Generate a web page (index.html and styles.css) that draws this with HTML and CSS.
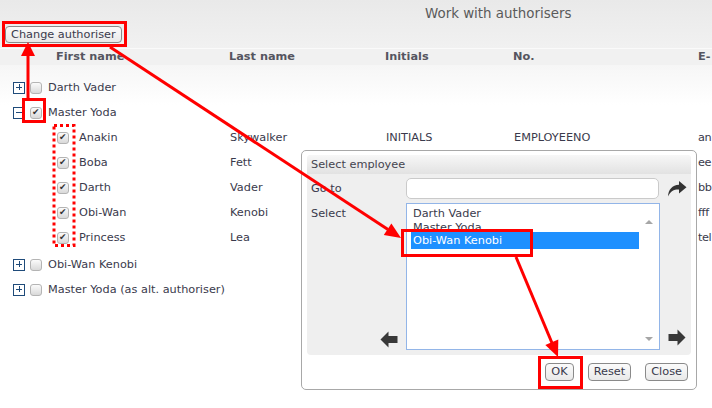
FILE: index.html
```html
<!DOCTYPE html>
<html>
<head>
<meta charset="utf-8">
<link rel="stylesheet" href="styles.css">
</head>
<body>
<div class="page">
  <div class="top">
    <div class="title">Work with authorisers</div>
    <button class="btn change">Change authoriser</button>
  </div>
  <div class="thead">
    <span class="h1">First name</span><span class="h2">Last name</span><span class="h3">Initials</span><span class="h4">No.</span><span class="h5">E-</span>
  </div>
  <div class="tree">
    <div class="row parent"><span class="exp plus"></span><span class="cb"></span><span class="pname">Darth Vader</span></div>
    <div class="row parent"><span class="exp minus"></span><span class="cb checked"></span><span class="pname">Master Yoda</span></div>
    <div class="children">
      <div class="row child"><span class="cb checked"></span><span class="c1">Anakin</span><span class="c2">Skywalker</span><span class="c3">INITIALS</span><span class="c4">EMPLOYEENO</span><span class="c5">an</span></div>
      <div class="row child"><span class="cb checked"></span><span class="c1">Boba</span><span class="c2">Fett</span><span class="c3"></span><span class="c4"></span><span class="c5">ee</span></div>
      <div class="row child"><span class="cb checked"></span><span class="c1">Darth</span><span class="c2">Vader</span><span class="c3"></span><span class="c4"></span><span class="c5">bb</span></div>
      <div class="row child"><span class="cb checked"></span><span class="c1">Obi-Wan</span><span class="c2">Kenobi</span><span class="c3"></span><span class="c4"></span><span class="c5">fff</span></div>
      <div class="row child"><span class="cb checked"></span><span class="c1">Princess</span><span class="c2">Lea</span><span class="c3"></span><span class="c4"></span><span class="c5">tel</span></div>
    </div>
    <div class="row parent"><span class="exp plus"></span><span class="cb"></span><span class="pname">Obi-Wan Kenobi</span></div>
    <div class="row parent"><span class="exp plus"></span><span class="cb"></span><span class="pname">Master Yoda (as alt. authoriser)</span></div>
  </div>

  <div class="dialog">
    <div class="panel">
      <div class="panel-head">Select employee</div>
      <div class="panel-body">
        <div class="lbl goto-lbl">Go to</div>
        <div class="input"></div>
        <div class="icon-cell">
          <svg class="fwd" width="20" height="18" viewBox="0 0 20 18"><path d="M12 1 L19.5 7.2 L12 13.4 L12 9.6 C7 9.4 3.6 11.2 1 16.5 C1.4 9.6 5.2 5.2 12 4.8 Z" fill="#333"/></svg>
        </div>
        <div class="lbl sel-lbl">
          <span>Select</span>
          <svg class="larrow" width="18" height="17" viewBox="0 0 18 17"><path d="M0.5 8.5 L8.5 0.5 L8.5 5 L17.5 5 L17.5 12 L8.5 12 L8.5 16.5 Z" fill="#383838"/></svg>
        </div>
        <div class="listbox">
          <div class="items">
            <div class="item">Darth Vader</div>
            <div class="item">Master Yoda</div>
            <div class="item selected">Obi-Wan Kenobi</div>
          </div>
          <div class="scroll"><span class="tri up"></span><span class="tri down"></span></div>
        </div>
        <div class="icon-cell bottom">
          <svg class="rarrow" width="18" height="17" viewBox="0 0 18 17"><path d="M17.5 8.5 L9.5 0.5 L9.5 5 L0.5 5 L0.5 12 L9.5 12 L9.5 16.5 Z" fill="#383838"/></svg>
        </div>
      </div>
    </div>
    <div class="actions">
      <button class="btn ok">OK</button>
      <button class="btn reset">Reset</button>
      <button class="btn close">Close</button>
    </div>
  </div>

  <svg class="marks" width="712" height="408" viewBox="0 0 712 408">
    <g fill="none" stroke="#ff0000" stroke-width="3">
      <rect x="3.5" y="22.5" width="122" height="23"/>
      <rect x="23.5" y="99.5" width="21" height="22"/>
      <rect x="402.5" y="230.5" width="129" height="25"/>
      <rect x="539.5" y="357.5" width="42" height="30"/>
      <rect x="54" y="125.5" width="20" height="120" stroke-dasharray="3 3"/>
      <line x1="28" y1="98" x2="28" y2="55"/>
      <line x1="110" y1="47" x2="388" y2="229.5"/>
      <line x1="516" y1="257" x2="552" y2="343"/>
    </g>
    <g fill="#ff0000">
      <polygon points="28,42 21,56 35,56"/>
      <polygon points="401,238 383.8,235.1 391.4,223.4"/>
      <polygon points="558,357 545.3,345 558.3,339.5"/>
    </g>
  </svg>
</div>
</body>
</html>
```

FILE: styles.css
```css
* { box-sizing: border-box; }
html, body { margin: 0; padding: 0; }
body {
  width: 712px;
  height: 408px;
  overflow: hidden;
  font-family: "DejaVu Sans", Verdana, sans-serif;
  font-size: 11.3px;
  color: #3a3a4c;
  background: #ffffff;
}
.page {
  position: relative;
  width: 712px;
  height: 408px;
  overflow: hidden;
}
.top {
  height: 48px;
  padding-top: 6px;
  background: linear-gradient(#e9e9e9, #f1f1f1);
}
.title {
  height: 15px;
  line-height: 15px;
  padding-left: 425px;
  font-size: 13.4px;
  color: #5a5a5a;
  white-space: nowrap;
}
.btn {
  font-family: "DejaVu Sans", Verdana, sans-serif;
  font-size: 11.3px;
  color: #3a3a4c;
  height: 18px;
  line-height: 16px;
  padding: 0 5px;
  border: 1px solid #8a8a8a;
  border-radius: 4px;
  background: linear-gradient(#fbfbfb, #e9e9e9);
  margin: 0;
}
.change {
  display: block;
  margin-top: 5px;
  margin-left: 5px;
  height: 17px;
}
.thead {
  display: flex;
  height: 17px;
  line-height: 16px;
  padding-left: 56px;
  border-top: 1px solid #fafafa;
  background: #f1f1f1;
  font-weight: bold;
  color: #555560;
  white-space: nowrap;
}
.thead span { flex: none; }
.h1 { width: 173px; }
.h2 { width: 156px; }
.h3 { width: 128px; }
.h4 { width: 185px; }
.tree {
  padding-top: 10px;
  background: linear-gradient(#f6f6f6, #ffffff 40px);
}
.row {
  display: flex;
  align-items: center;
  height: 25px;
  white-space: nowrap;
}
.row > span { flex: none; }
.parent { padding-left: 13px; }
.child { padding-left: 57px; }
.children { margin-bottom: 2px; }
.exp {
  position: relative;
  width: 12px;
  height: 12px;
  border: 1px solid #1f4b7a;
  background: #fff;
  margin-right: 5px;
}
.exp::before {
  content: "";
  position: absolute;
  left: 2px;
  top: 4px;
  width: 6px;
  height: 1px;
  background: #1f4b7a;
}
.plus::after {
  content: "";
  position: absolute;
  left: 4.5px;
  top: 1.5px;
  width: 1px;
  height: 6px;
  background: #1f4b7a;
}
.cb {
  position: relative;
  width: 12px;
  height: 12px;
  border: 1px solid #b4b4b4;
  border-radius: 3px;
  background: linear-gradient(#fbfbfb, #d9d9d9);
}
.checked::after {
  content: "\2714";
  position: absolute;
  left: 1px;
  top: -1px;
  font-size: 9px;
  line-height: 11px;
  color: #333;
}
.parent .cb { margin-right: 6px; }
.child .cb { margin-right: 10px; }
.c1 { width: 151px; }
.c2 { width: 156px; }
.c3 { width: 128px; }
.c4 { width: 184px; }
.c5 { width: 13px; letter-spacing: -0.4px; }

.dialog {
  position: absolute;
  left: 301px;
  top: 150px;
  width: 396px;
  height: 240px;
  border: 1px solid #a8a8a8;
  border-radius: 5px;
  background: #ffffff;
  padding: 4px 5px 0 5px;
}
.panel {
  width: 384px;
  height: 200px;
  background: #efefef;
  border-radius: 4px;
}
.panel-head {
  height: 19px;
  line-height: 19px;
  padding-left: 4px;
  color: #44444f;
  border-radius: 4px 4px 0 0;
  background: linear-gradient(#f7f7f7, #e2e2e2);
}
.panel-body {
  display: grid;
  grid-template-columns: 99px 254px 31px;
  grid-template-rows: 21px 147px;
  row-gap: 4px;
  padding-top: 4px;
}
.lbl { padding-left: 4px; }
.goto-lbl { display: flex; align-items: center; }
.sel-lbl {
  display: flex;
  flex-direction: column;
  justify-content: space-between;
  padding-top: 4px;
  padding-right: 8px;
  padding-bottom: 2px;
}
.larrow { align-self: flex-end; }
.input {
  width: 253px;
  height: 21px;
  border: 1px solid #cacaca;
  border-radius: 5px;
  background: #fff;
}
.icon-cell {
  display: flex;
  padding-left: 7px;
}
.icon-cell .fwd { margin-top: 2px; }
.icon-cell.bottom { align-items: flex-end; padding-left: 8px; padding-bottom: 4px; }
.listbox {
  display: flex;
  border: 1px solid #92b5e8;
  background: #fff;
}
.items {
  flex: 1;
  padding: 3px 0 0 4px;
}
.item {
  height: 14px;
  line-height: 14px;
  padding-left: 2px;
  white-space: nowrap;
}
.item.selected {
  position: relative;
  margin-top: -3px;
  height: 17px;
  line-height: 17px;
  background: #1e90ff;
  color: #ffffff;
}
.scroll {
  width: 20px;
  display: flex;
  flex-direction: column;
  justify-content: space-between;
  align-items: center;
  padding: 16px 0 8px 0;
}
.tri {
  width: 0;
  height: 0;
  border-left: 4px solid transparent;
  border-right: 4px solid transparent;
}
.tri.up { border-bottom: 4px solid #a6a6a6; }
.tri.down { border-top: 4px solid #a6a6a6; }
.actions {
  display: flex;
  justify-content: flex-end;
  gap: 14px;
  margin-top: 8px;
  padding-right: 3px;
}
.marks {
  position: absolute;
  left: 0;
  top: 0;
  pointer-events: none;
}
```
